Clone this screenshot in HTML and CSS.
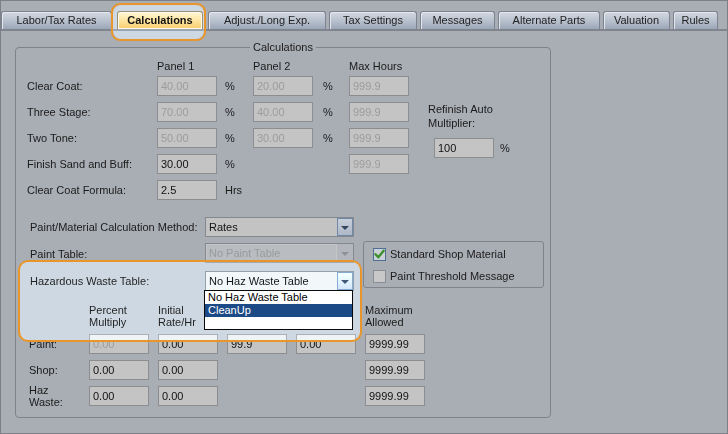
FILE: index.html
```html
<!DOCTYPE html>
<html>
<head>
<meta charset="utf-8">
<link rel="stylesheet" href="styles.css">
</head>
<body>
<div class="window">
  <div class="tabs">
    <div class="tab w-labor">Labor/Tax Rates</div>
    <div class="tab active w-calc">Calculations</div>
    <div class="tab w-adjust">Adjust./Long Exp.</div>
    <div class="tab w-tax">Tax Settings</div>
    <div class="tab w-msg">Messages</div>
    <div class="tab w-alt">Alternate Parts</div>
    <div class="tab w-val">Valuation</div>
    <div class="tab w-rules">Rules</div>
  </div>

  <div class="group">
    <div class="group-title">Calculations</div>

    <div class="rates">
      <div></div><div class="colhead">Panel 1</div><div></div><div class="colhead">Panel 2</div><div></div><div class="colhead">Max Hours</div><div></div>

      <div class="lbl">Clear Coat:</div>
      <div class="inp dis">40.00</div><div class="pct">%</div>
      <div class="inp dis">20.00</div><div class="pct pct2">%</div>
      <div class="inp dis">999.9</div><div></div>

      <div class="lbl">Three Stage:</div>
      <div class="inp dis">70.00</div><div class="pct">%</div>
      <div class="inp dis">40.00</div><div class="pct pct2">%</div>
      <div class="inp dis">999.9</div>

      <div class="lbl">Two Tone:</div>
      <div class="inp dis">50.00</div><div class="pct">%</div>
      <div class="inp dis">30.00</div><div class="pct pct2">%</div>
      <div class="inp dis">999.9</div>

      <div class="lbl">Finish Sand and Buff:</div>
      <div class="inp">30.00</div><div class="pct">%</div>
      <div></div><div></div>
      <div class="inp dis">999.9</div>

      <div class="lbl">Clear Coat Formula:</div>
      <div class="inp">2.5</div><div class="pct">Hrs</div>
      <div></div><div></div><div></div>

      <div class="refinish">
        <div class="ref-lbl">Refinish Auto<br>Multiplier:</div>
        <div class="ref-row"><div class="inp ref-inp">100</div><span class="pct-inline">%</span></div>
      </div>
    </div>

    <div class="method">
      <div class="lbl">Paint/Material Calculation Method:</div>
      <div class="select">
        <div class="val">Rates</div>
        <div class="btn"><span class="arrow"></span></div>
      </div>

      <div class="chkbox">
        <div class="chk-row">
          <span class="cb checked"><svg width="11" height="11" viewBox="0 0 11 11"><path d="M1.5 5.2 L4.3 8.3 L9.6 1.8" fill="none" stroke="#3f8f2f" stroke-width="2.4" stroke-linecap="round" stroke-linejoin="round"/></svg></span>
          <span>Standard Shop Material</span>
        </div>
        <div class="chk-row">
          <span class="cb"></span>
          <span>Paint Threshold Message</span>
        </div>
      </div>

      <div class="lbl">Paint Table:</div>
      <div class="select disabled">
        <div class="val">No Paint Table</div>
        <div class="btn"><span class="arrow"></span></div>
      </div>

      <div class="lbl">Hazardous Waste Table:</div>
      <div class="select open">
        <div class="val">No Haz Waste Table</div>
        <div class="btn"><span class="arrow"></span></div>
        <div class="list">
          <div class="item">No Haz Waste Table</div>
          <div class="item sel">CleanUp</div>
          <div class="item"></div>
        </div>
      </div>
    </div>

    <div class="totals">
      <div></div>
      <div class="colhead2">Percent<br>Multiply</div>
      <div class="colhead2">Initial<br>Rate/Hr</div>
      <div></div>
      <div></div>
      <div class="colhead2">Maximum<br>Allowed</div>

      <div class="lbl">Paint:</div>
      <div class="inp dis">0.00</div>
      <div class="inp">0.00</div>
      <div class="inp">99.9</div>
      <div class="inp">0.00</div>
      <div class="inp">9999.99</div>

      <div class="lbl">Shop:</div>
      <div class="inp">0.00</div>
      <div class="inp">0.00</div>
      <div></div><div></div>
      <div class="inp">9999.99</div>

      <div class="lbl two">Haz<br>Waste:</div>
      <div class="inp">0.00</div>
      <div class="inp">0.00</div>
      <div></div><div></div>
      <div class="inp">9999.99</div>
    </div>
  </div>

  <div class="hl hl-tab"></div>
  <div class="hl hl-haz"></div>
</div>
</body>
</html>
```
FILE: styles.css
```css
* { box-sizing: border-box; }
html, body { margin: 0; padding: 0; }
body {
  background: #a9adb4;
  font-family: "Liberation Sans", Arial, sans-serif;
  font-size: 11px;
  color: #1b1b1b;
  width: 728px;
  height: 434px;
  overflow: hidden;
}
.window {
  position: relative;
  width: 728px;
  height: 434px;
  border: 1px solid #7d8086;
  background: #a9adb4;
}

/* tabs */
.tabs {
  display: flex;
  gap: 3px;
  height: 20px;
  margin-top: 10px;
  border-bottom: 2px solid #80858d;
}
.tab {
  height: 18px;
  border: 1px solid #7b8390;
  border-bottom: 0;
  border-radius: 3px 3px 0 0;
  background: linear-gradient(#d3d9e1, #b6bfcc 55%, #9ba6b7);
  box-shadow: inset 1px 1px 0 #e4e8ee;
  text-align: center;
  line-height: 17px;
  color: #222;
  white-space: nowrap;
}
.tab.active {
  position: relative;
  z-index: 2;
  margin: 0 2px;
  font-weight: bold;
  color: #111;
  border-color: #9b8f74;
  background: linear-gradient(#fff7d6, #ffe7a6 45%, #f8cd6d);
  box-shadow: inset 0 0 0 1px #fffaf0;
}
.w-labor { width: 111px; }
.w-calc { width: 86px; }
.w-adjust { width: 118px; }
.w-tax { width: 88px; }
.w-msg { width: 75px; }
.w-alt { width: 102px; }
.w-val { width: 67px; }
.w-rules { width: 45px; }

/* group box */
.group {
  margin: 16px 0 0 14px;
  width: 536px;
  height: 371px;
  border: 1px solid #7e828a;
  border-radius: 4px;
}
.group-title {
  width: fit-content;
  margin: -8px auto 0;
  padding: 0 3px;
  background: #a9adb4;
  line-height: 14px;
  color: #1b1b1b;
}

/* inputs */
.inp {
  height: 20px;
  border: 1px solid #8b8d91;
  background: #c4c4c4;
  padding-left: 3px;
  line-height: 18px;
  color: #111;
  white-space: nowrap;
}
.inp.dis { color: #9c9c9c; }
.lbl { align-self: center; white-space: nowrap; line-height: 13px; }

/* rates grid */
.rates {
  display: grid;
  grid-template-columns: 130px 60px 36px 60px 36px 60px 1fr;
  grid-template-rows: 13px repeat(5, 20px);
  row-gap: 6px;
  margin-top: 3px;
  padding-left: 11px;
}
.colhead {
  align-self: end;
  margin-bottom: -3px;
  line-height: 13px;
}
.pct { align-self: center; padding-left: 8px; line-height: 13px; }
.pct2 { padding-left: 10px; }
.refinish {
  grid-column: 7;
  grid-row: 3 / span 3;
  padding-left: 19px;
}
.ref-lbl { line-height: 14px; }
.ref-row {
  display: flex;
  align-items: center;
  gap: 6px;
  margin: 8px 0 0 6px;
}
.ref-inp { width: 60px; }

/* method grid */
.method {
  display: grid;
  grid-template-columns: 175px 149px 190px;
  grid-template-rows: 20px 22px 20px;
  row-gap: 6px;
  margin-top: 17px;
  padding-left: 14px;
}
.method .lbl { grid-column: 1; }
.method .select { grid-column: 2; align-self: start; }
.select {
  position: relative;
  display: flex;
  height: 20px;
  border: 1px solid #85898f;
  background: #c3c3c3;
}
.select .val {
  flex: 1;
  padding-left: 3px;
  line-height: 18px;
  color: #111;
  white-space: nowrap;
}
.select .btn {
  width: 16px;
  margin: 0 0 0 0;
  border: 1px solid #6f88a8;
  background: linear-gradient(#c7cfda, #aeb8c6);
  display: flex;
  align-items: center;
  justify-content: center;
}
.arrow {
  width: 0;
  height: 0;
  border-left: 4px solid transparent;
  border-right: 4px solid transparent;
  border-top: 4px solid #34465e;
  margin-top: 1px;
}
.select.disabled { background: #b9bcc1; }
.select.disabled .val { color: #9a9a9a; box-shadow: inset 0 0 0 1px #c6c6c6; }
.select.disabled .btn { border-color: transparent; background: #b3b7bd; }
.select.disabled .arrow { border-top-color: #8e9298; }
.select.open { background: #c6c6c6; border-color: #7b8088; }
.list {
  position: absolute;
  z-index: 3;
  left: -2px;
  top: 18px;
  width: 149px;
  height: 40px;
  border: 1px solid #0a0a0a;
  background: #fff;
}
.item {
  height: 13px;
  line-height: 13px;
  padding-left: 3px;
  color: #000;
  white-space: nowrap;
}
.item.sel { background: #1c4a86; color: #fff; }

.chkbox {
  grid-column: 3;
  grid-row: 2 / span 2;
  align-self: start;
  margin: -2px 0 0 9px;
  width: 181px;
  height: 47px;
  border: 1px solid #7f848c;
  border-radius: 3px;
  padding: 6px 0 0 9px;
  display: flex;
  flex-direction: column;
  gap: 9px;
}
.chk-row {
  display: flex;
  align-items: center;
  gap: 4px;
  height: 13px;
  line-height: 13px;
  white-space: nowrap;
}
.cb {
  width: 13px;
  height: 13px;
  border: 1px solid #8a8e94;
  background: #c8c8c8;
  display: flex;
  align-items: center;
  justify-content: center;
}
.cb.checked { border-color: #4f6e92; background: #c9d0d8; }

/* totals grid */
.totals {
  display: grid;
  grid-template-columns: 51px repeat(5, 60px);
  grid-template-rows: 24px repeat(3, 20px);
  column-gap: 9px;
  row-gap: 6px;
  margin-top: 13px;
  padding-left: 13px;
}
.colhead2 { line-height: 12px; white-space: nowrap; }
.lbl.two { line-height: 12px; }

/* highlight annotations */
.hl {
  position: absolute;
  border: 2px solid #e8962b;
  border-radius: 10px;
}
.hl::before {
  content: "";
  position: absolute;
  inset: 0;
  border-radius: 8px;
  background: rgb(46, 51, 52);
  mix-blend-mode: color-dodge;
}
.hl-tab {
  left: 110px;
  top: 2px;
  width: 95px;
  height: 38px;
  border-radius: 9px;
}
.hl-haz {
  left: 17px;
  top: 259px;
  width: 344px;
  height: 82px;
}
```
